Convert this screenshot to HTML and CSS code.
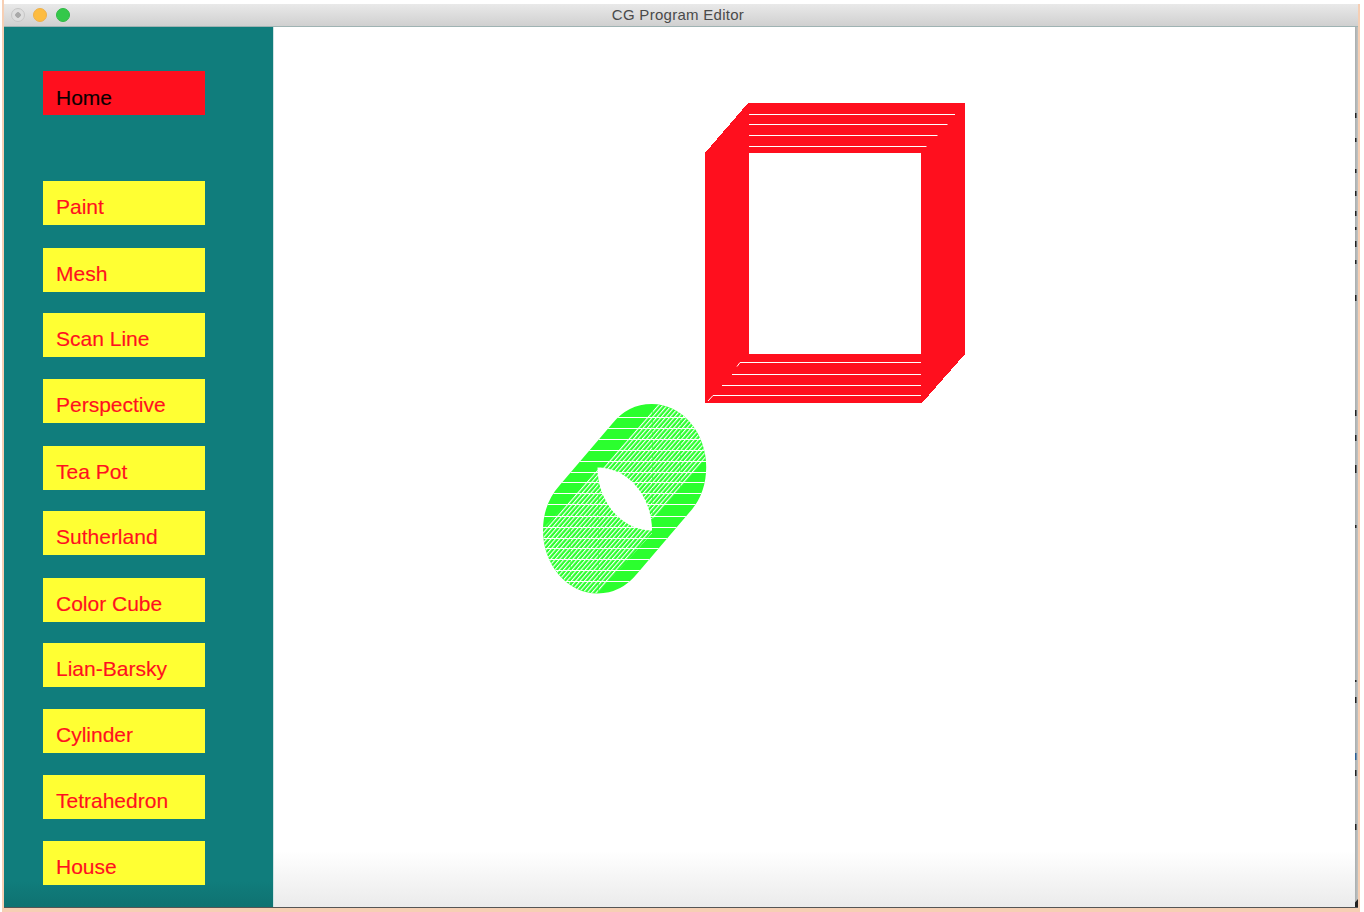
FILE: index.html
```html
<!DOCTYPE html>
<html lang="en">
<head>
<meta charset="utf-8">
<title>CG Program Editor</title>
<link rel="stylesheet" href="styles.css">
</head>
<body>
<div class="frame">
  <div class="top-gap"></div>
  <div class="window">
    <header class="titlebar">
      <div class="lights">
        <span class="light light-close"></span>
        <span class="light light-min"></span>
        <span class="light light-max"></span>
      </div>
      <div class="title">CG Program Editor</div>
    </header>
    <div class="content">
      <nav class="sidebar">
        <a class="btn btn-home">Home</a>
        <a class="btn">Paint</a>
        <a class="btn nudge">Mesh</a>
        <a class="btn">Scan Line</a>
        <a class="btn">Perspective</a>
        <a class="btn nudge">Tea Pot</a>
        <a class="btn">Sutherland</a>
        <a class="btn nudge">Color Cube</a>
        <a class="btn">Lian-Barsky</a>
        <a class="btn">Cylinder</a>
        <a class="btn">Tetrahedron</a>
        <a class="btn">House</a>
      </nav>
      <main class="canvas">
        <svg class="drawing" viewBox="273 27 1083 880" width="1083" height="880" xmlns="http://www.w3.org/2000/svg">
          <defs>
            <pattern id="hatch" patternUnits="userSpaceOnUse" width="3.3" height="8" patternTransform="rotate(41)">
              <rect class="white" x="0" y="0" width="1.1" height="8"/>
            </pattern>
            <clipPath id="clip-body">
              <ellipse cx="651.7" cy="467" rx="54.5" ry="63"/>
              <ellipse cx="597.5" cy="530.5" rx="54.5" ry="63"/>
              <polygon points="612.9,422.8 690.5,511.2 636.3,574.7 558.7,486.3"/>
            </clipPath>
            <clipPath id="clip-top"><ellipse cx="651.7" cy="467" rx="54.5" ry="63"/></clipPath>
            <clipPath id="clip-bottom"><ellipse cx="597.5" cy="530.5" rx="54.5" ry="63"/></clipPath>
            <clipPath id="band-top"><polygon points="662,400 710,400 710,453 654,519 600,519 600,470"/></clipPath>
            <clipPath id="band-bottom"><polygon points="540,532 602,465 655,530 592,600 540,600"/></clipPath>
          </defs>

          <path class="red" fill-rule="evenodd" d="M705 153L748 103H965V354L922 403H705ZM749 153V354H921V153Z"/>
          <g class="white-line">
            <path d="M749 114.500H955M749 124.500H947.500M749 135.500H937.500M749 146.500H926.500"/>
            <path d="M921 362.500H740L737 366.500M921 374.500H732M921 385.500H722M921 395.500H713L708 401"/>
          </g>

          <g clip-path="url(#clip-body)">
            <rect class="green" x="540" y="400" width="170" height="197"/>
            <g clip-path="url(#clip-top)">
              <rect x="590" y="400" width="120" height="135" fill="url(#hatch)" clip-path="url(#band-top)"/>
            </g>
            <g clip-path="url(#clip-bottom)">
              <rect x="540" y="465" width="120" height="132" fill="url(#hatch)" clip-path="url(#band-bottom)"/>
            </g>
            <path class="green-line" d="M652.500 404V530M680.500 420V500M570.500 530V590M598.500 470V592"/>
            <path class="white-line" d="M540 417.500H710M540 428.500H710M540 439.500H710M540 450.500H710M540 461.500H710M540 472.500H710M540 482.500H710M540 493.500H710M540 504.500H710M540 516.500H710M540 527.500H710M540 538.500H710M540 548.500H710M540 559.500H710M540 570.500H710M540 581.500H710"/>
          </g>
          <path class="white" d="M597.500 467.500A54.500 63 0 0 1 652 530.500A54.500 63 0 0 1 597.500 467.500Z"/>
        </svg>
        <div class="bottom-fade"></div>
      </main>
      <div class="edge">
        <svg class="edge-marks" viewBox="0 27 3 880" width="3" height="880" xmlns="http://www.w3.org/2000/svg">
          <path class="mark" d="M0 113h1.500v5H0ZM0 138h1.500v4H0ZM0 169h1.500v4H0ZM0 191h1.500v5H0ZM0 211h1.500v5H0ZM0 227h1.500v3H0ZM0 241h1.500v6H0ZM0 260h1.500v4H0ZM0 295h1.500v6H0ZM0 410h1.500v6H0ZM0 435h1.500v6H0ZM0 465h1.500v8H0ZM0 525h1.500v3H0ZM0 680h1.500v2H0ZM0 697h1.500v6H0ZM0 770h1.500v6H0ZM0 824h1.500v6H0Z"/>
          <path class="mark-blue" d="M0 753h1.500v7H0Z"/>
          <path class="mark" d="M3 899V907H-4Z"/>
        </svg>
      </div>
    </div>
  </div>
</div>
</body>
</html>
```

FILE: styles.css
```css
* { box-sizing: border-box; }
html, body { margin: 0; padding: 0; background: #fff; }
body { width: 1364px; height: 912px; overflow: hidden; }

.frame {
  margin-left: 2px;
  width: 1358px;
  height: 912px;
  padding: 0 2px 4px 2px;
  background: #f6cfb4;
  display: flex;
  flex-direction: column;
}
.top-gap { height: 4px; margin: 0 -2px 0 0; background: #fff; flex: none; }
.window { flex: 1; display: flex; flex-direction: column; min-height: 0; border-bottom: 1px solid #555; }

.titlebar {
  height: 23px;
  flex: none;
  background: linear-gradient(#e9e9e9, #d0d0d0);
  border-bottom: 1px solid #9fb3b3;
  display: flex;
  align-items: center;
  position: relative;
}
.lights { display: flex; gap: 8.350px; padding-left: 7px; }
.light { width: 14px; height: 14px; border-radius: 50%; display: block; }
.light-close { background: radial-gradient(circle, #a9a9a9 0 2.500px, #dedede 3px); border: 1px solid #c6c6c6; }
.light-min { background: #fdbc40; border: 1px solid #eeb04a; }
.light-max { background: #34c84a; border: 1px solid #30b946; }
.title {
  position: absolute;
  left: 0;
  right: 0;
  top: 2px;
  padding-right: 6px;
  text-align: center;
  font: 15px/18px "Liberation Sans", Arial, sans-serif;
  letter-spacing: 0.280px;
  color: #4a4a4a;
}

.content { flex: 1; display: flex; min-height: 0; }
.sidebar {
  width: 269px;
  flex: none;
  background: linear-gradient(#107d7c 0, #107d7c 97%, #0f7271 100%);
  padding: 44px 0 0 38.500px;
  display: flex;
  flex-direction: column;
  gap: 22px;
}
.btn {
  width: 162.500px;
  height: 44px;
  flex: none;
  background: #ffff33;
  color: #ff1020;
  font: 21px/24px "Liberation Sans", Arial, sans-serif;
  -webkit-text-stroke: 0.150px currentColor;
  padding: 14px 0 0 13.500px;
  white-space: nowrap;
}
.btn-home { background: #ff0f1e; color: #0a0000; margin-bottom: 44px; padding-top: 15px; }
.nudge { margin-top: 1px; margin-bottom: -1px; }

.canvas {
  flex: 1;
  background: #fff;
  position: relative;
  border-left: 1px solid #cfe3e3;
  overflow: hidden;
}
.drawing { display: block; position: absolute; left: -1px; top: 0; }
.bottom-fade {
  position: absolute;
  left: 0;
  right: 0;
  bottom: 0;
  height: 56px;
  background: linear-gradient(rgba(235,235,235,0), #ebebeb);
}
.edge { width: 3px; flex: none; background: linear-gradient(90deg, #a9adad, #c2c4c4); }
.edge-marks { display: block; overflow: visible; }
.mark { fill: #222; }
.mark-blue { fill: #2a5f95; }

.red { fill: #ff0f1e; shape-rendering: crispEdges; }
.green { fill: #2bff2e; }
.white { fill: #fff; }
.white-line { fill: none; stroke: #fff; stroke-width: 1; }
.green-line { fill: none; stroke: #2bff2e; stroke-width: 1; stroke-opacity: 0.55; stroke-dasharray: 5 2; }
```
